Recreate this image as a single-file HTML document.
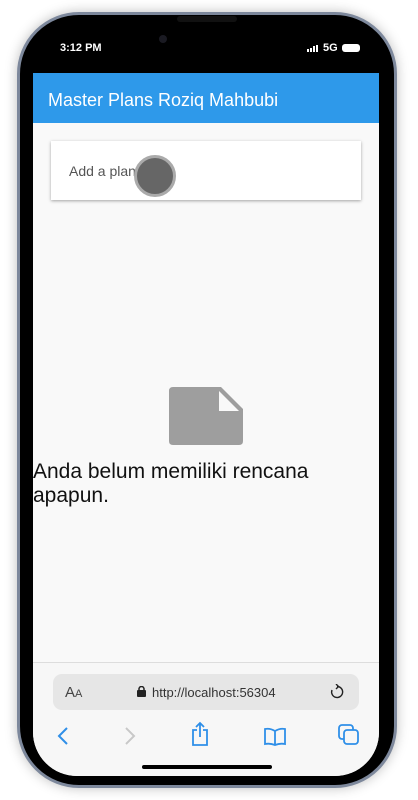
<!DOCTYPE html>
<html><head><style>
*{margin:0;padding:0;box-sizing:border-box}
body{width:418px;height:800px;background:#fff;position:relative;overflow:hidden;font-family:"Liberation Sans",sans-serif}
.frame{position:absolute;left:17px;top:12px;width:380px;height:776px;border-radius:62px;background:#000;border:3px solid #7d889c;box-shadow:0 0 12px rgba(0,0,0,.25)}
.screen{position:absolute;left:33px;top:24px;width:346px;height:752px;border-radius:44px;background:#000;overflow:hidden}
.app{position:absolute;left:0;top:49px;width:346px;height:703px;background:#f9f9f9}
.bar{height:50px;background:#2e99ea;color:#fff;font-size:18px;padding:17px 0 0 15px}
.card{position:absolute;left:18px;top:68px;width:310px;height:59px;background:#fff;box-shadow:0 1px 3px rgba(0,0,0,.35);font-size:14px;color:#555;padding:22px 0 0 18px}
.dot{position:absolute;left:101px;top:82px;width:42px;height:42px;border-radius:50%;background:#666;border:3px solid #aaa}
.msg{position:absolute;left:0;top:387px;font-size:21px;color:#111;line-height:24px;width:320px}
.bottom{position:absolute;left:0;top:589px;width:346px;height:114px;background:#f7f7f7;border-top:1px solid #ddd}
.url{position:absolute;left:20px;top:11px;width:306px;height:36px;background:#e6e6e6;border-radius:9px;font-size:13px;color:#333}
.home{position:absolute;top:765px;width:130px;height:4px;border-radius:2px;background:#000}
</style></head><body>
<div class="frame"></div>
<div style="position:absolute;left:177px;top:16px;width:60px;height:6px;border-radius:3px;background:#111"></div>
<div class="screen">
 <div style="position:absolute;left:126px;top:11px;width:8px;height:8px;border-radius:50%;background:#1a1a22"></div>
 <div style="position:absolute;left:27px;top:18px;color:#fff;font-size:11px;font-weight:bold">3:12 PM</div>
 <div style="position:absolute;left:274px;top:21px;display:flex;gap:1px;align-items:flex-end">
  <i style="width:2px;height:3px;background:#fff"></i><i style="width:2px;height:4px;background:#fff"></i><i style="width:2px;height:6px;background:#fff"></i><i style="width:2px;height:7px;background:#fff"></i>
 </div>
 <div style="position:absolute;left:290px;top:18px;color:#fff;font-size:11px;font-weight:bold">5G</div>
 <div style="position:absolute;left:309px;top:20px;width:18px;height:8px;border-radius:3px;background:#fff"></div>
 <div class="app">
  <div class="bar">Master Plans Roziq Mahbubi</div>
  <div class="card">Add a plan</div>
  <div class="dot"></div>
  <svg style="position:absolute;left:136px;top:314px" width="74" height="58" viewBox="0 0 74 58"><path d="M4 0H52L74 22V54Q74 58 70 58H4Q0 58 0 54V4Q0 0 4 0Z" fill="#9e9e9e"/><path d="M50 4V24H70Z" fill="#f9f9f9"/></svg>
  <div class="msg">Anda belum memiliki rencana apapun.</div>
  <div class="bottom">
   <div class="url">
    <span style="position:absolute;left:12px;top:10px;font-size:15px;color:#444">A<span style="font-size:11px">A</span></span>
    <svg style="position:absolute;left:84px;top:12px" width="9" height="11"><rect x="0" y="4" width="9" height="7" rx="1" fill="#222"/><path d="M2 5V3a2.5 2.5 0 015 0v2" stroke="#222" stroke-width="1.5" fill="none"/></svg>
    <span style="position:absolute;left:99px;top:11px">http://localhost:56304</span>
    <svg style="position:absolute;left:276px;top:10px" width="16" height="16" viewBox="0 0 16 16"><path d="M8 2.5A5.5 5.5 0 1 1 3 6" stroke="#222" stroke-width="1.4" fill="none"/><path d="M7 0L9.5 2.5L7 5" stroke="#222" stroke-width="1.4" fill="none"/></svg>
   </div>
   <svg style="position:absolute;left:24px;top:63px" width="12" height="20"><path d="M10 2L2 10L10 18" stroke="#2f8fe8" stroke-width="2" fill="none"/></svg>
   <svg style="position:absolute;left:91px;top:63px" width="12" height="20"><path d="M2 2L10 10L2 18" stroke="#c8c8c8" stroke-width="2" fill="none"/></svg>
   <svg style="position:absolute;left:157px;top:58px" width="20" height="26"><path d="M7 9H3V24H17V9H13M10 16V2M6 6L10 2L14 6" stroke="#2f8fe8" stroke-width="1.8" fill="none"/></svg>
   <svg style="position:absolute;left:230px;top:64px" width="24" height="20"><path d="M12 4Q7 1 2 2V17Q7 16 12 18Q17 16 22 17V2Q17 1 12 4V18" stroke="#2f8fe8" stroke-width="1.8" fill="none"/></svg>
   <svg style="position:absolute;left:305px;top:61px" width="22" height="22"><rect x="1" y="1" width="14" height="14" rx="3" stroke="#2f8fe8" stroke-width="1.8" fill="none"/><rect x="6" y="6" width="14" height="14" rx="3" stroke="#2f8fe8" stroke-width="1.8" fill="#f7f7f7"/></svg>
  </div>
 </div>
</div>
<div class="home" style="left:142px"></div>
</body></html>
